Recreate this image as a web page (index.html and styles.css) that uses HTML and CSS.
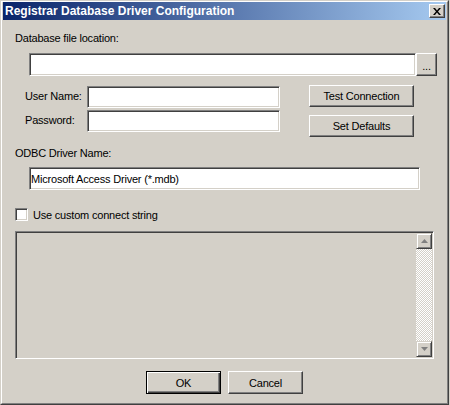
FILE: index.html
```html
<!DOCTYPE html>
<html lang="en">
<head>
    <meta charset="UTF-8">
    <title>Registrar Database Driver Configuration</title>
    <link rel="stylesheet" href="styles.css">
</head>
<body>
    <div class="window">
        <div class="frame">
            <div class="titlebar">
                <span class="title">Registrar Database Driver Configuration</span>
                <button class="close">
                    <svg width="8" height="7" viewBox="0 0 8 7">
                        <path d="M0 0h2l2 2.5L6 0h2L5 3.5 8 7H6L4 4.5 2 7H0l3-3.5z" fill="#000"/>
                    </svg>
                </button>
            </div>

            <div class="content">
                <div class="label first">Database file location:</div>
                <div class="file-row">
                    <input class="field file" type="text">
                    <button class="btn browse">...</button>
                </div>

                <div class="login">
                    <div class="creds">
                        <div class="cred-row"><label>User Name:</label><input class="field cred" type="text"></div>
                        <div class="cred-row"><label>Password:</label><input class="field cred" type="password"></div>
                    </div>
                    <div class="actions">
                        <button class="btn wide">Test Connection</button>
                        <button class="btn wide">Set Defaults</button>
                    </div>
                </div>

                <div class="label odbc">ODBC Driver Name:</div>
                <input class="field driver" type="text" value="Microsoft Access Driver (*.mdb)">

                <div class="check-row">
                    <span class="checkbox"></span>
                    <span>Use custom connect string</span>
                </div>

                <!-- disabled connect string box -->
                <div class="connect-box">
                    <div class="scrollbar">
                        <div class="arrow">
                            <svg width="7" height="5" viewBox="0 0 7 5"><path d="M3.5 0L7 4H0z" fill="#808080"/></svg>
                        </div>
                        <div class="track"></div>
                        <div class="arrow">
                            <svg width="7" height="5" viewBox="0 0 7 5"><path d="M0 0h7L3.5 4z" fill="#808080"/></svg>
                        </div>
                    </div>
                </div>

                <div class="footer">
                    <button class="btn default">OK</button>
                    <button class="btn">Cancel</button>
                </div>
            </div>
        </div>
    </div>
</body>
</html>
```

FILE: styles.css
```css
body {
    margin: 0;
    background: #d4d0c8;
    font-family: "Liberation Sans", Arial, sans-serif;
    font-size: 11px;
    letter-spacing: -0.2px;
    color: #000;
}
.window {
    width: 449px;
    height: 405px;
    box-sizing: border-box;
    border: 1px solid;
    border-color: #d4d0c8 #404040 #404040 #d4d0c8;
    background: #d4d0c8;
}
.frame {
    height: 100%;
    box-sizing: border-box;
    border: 1px solid;
    border-color: #fff #808080 #808080 #fff;
    padding: 0 1px 1px 1px;
}
.titlebar {
    height: 18px;
    display: flex;
    align-items: center;
    justify-content: space-between;
    background: linear-gradient(to right, #0a246a, #a6caf0);
}
.title {
    color: #fff;
    font-weight: bold;
    font-size: 12px;
    letter-spacing: 0;
    padding-left: 2px;
    white-space: nowrap;
}
.close {
    width: 16px;
    height: 14px;
    margin-right: 1px;
    padding: 0;
    display: flex;
    align-items: center;
    justify-content: center;
    background: #d4d0c8;
    border: 1px solid;
    border-color: #fff #404040 #404040 #fff;
    box-shadow: inset -1px -1px #808080;
}
.content {
    padding-left: 12px;
}
.label {
    line-height: 13px;
    height: 13px;
}
.label.first {
    margin-top: 12px;
}
.label.odbc {
    margin-top: 10px;
}
.field {
    box-sizing: border-box;
    display: block;
    margin: 0;
    padding: 0 1px;
    font-family: inherit;
    font-size: 11px;
    letter-spacing: inherit;
    background: #fff;
    border: 1px solid;
    border-color: #808080 #fff #fff #808080;
    box-shadow: inset 1px 1px #404040, inset -1px -1px #d4d0c8;
    outline: none;
}
.file-row {
    display: flex;
    margin: 8px 0 0 14px;
}
.field.file {
    width: 387px;
    height: 23px;
}
.btn {
    box-sizing: border-box;
    margin: 0;
    padding: 0;
    font-family: inherit;
    font-size: 11px;
    letter-spacing: inherit;
    color: #000;
    background: #d4d0c8;
    border: 1px solid;
    border-color: #fff #404040 #404040 #fff;
    box-shadow: inset -1px -1px #808080;
    height: 23px;
}
.btn.browse {
    width: 21px;
    padding-top: 3px;
}
.login {
    display: flex;
    margin-top: 9px;
}
.creds {
    margin-left: 10px;
    padding-top: 1px;
    display: flex;
    flex-direction: column;
    gap: 2px;
}
.cred-row {
    display: flex;
    align-items: center;
}
.cred-row label {
    width: 62px;
    margin-top: -3px;
}
.field.cred {
    width: 193px;
    height: 22px;
}
.actions {
    margin-left: 29px;
    display: flex;
    flex-direction: column;
    gap: 8px;
}
.btn.wide {
    width: 105px;
    height: 22px;
}
.field.driver {
    width: 391px;
    height: 23px;
    margin: 7px 0 0 14px;
}
.check-row {
    display: flex;
    align-items: center;
    gap: 5px;
    height: 13px;
    margin-top: 18px;
}
.checkbox {
    width: 13px;
    height: 13px;
    box-sizing: border-box;
    background: #fff;
    border: 1px solid;
    border-color: #808080 #fff #fff #808080;
    box-shadow: inset 1px 1px #404040, inset -1px -1px #d4d0c8;
}
.connect-box {
    width: 419px;
    height: 128px;
    margin-top: 10px;
    box-sizing: border-box;
    border: 1px solid;
    border-color: #808080 #fff #fff #808080;
    box-shadow: inset 1px 1px #404040, inset -1px -1px #d4d0c8;
    padding: 1px;
    display: flex;
    justify-content: flex-end;
}
.scrollbar {
    width: 16px;
    display: flex;
    flex-direction: column;
}
.arrow {
    width: 16px;
    height: 16px;
    box-sizing: border-box;
    display: flex;
    align-items: center;
    justify-content: center;
    background: #d4d0c8;
    border: 1px solid;
    border-color: #d4d0c8 #404040 #404040 #d4d0c8;
    box-shadow: inset 1px 1px #fff, inset -1px -1px #808080;
}
.track {
    flex: 1;
    background-image: conic-gradient(#fff 25%, #d4d0c8 0 50%, #fff 0 75%, #d4d0c8 0);
    background-size: 2px 2px;
}
.footer {
    display: flex;
    justify-content: center;
    gap: 7px;
    margin: 12px 0 0 -12px;
}
.footer .btn {
    width: 75px;
}
.btn.default {
    border-color: #000;
    box-shadow: inset 1px 1px #fff, inset -1px -1px #404040, inset -2px -2px #808080;
}
```
